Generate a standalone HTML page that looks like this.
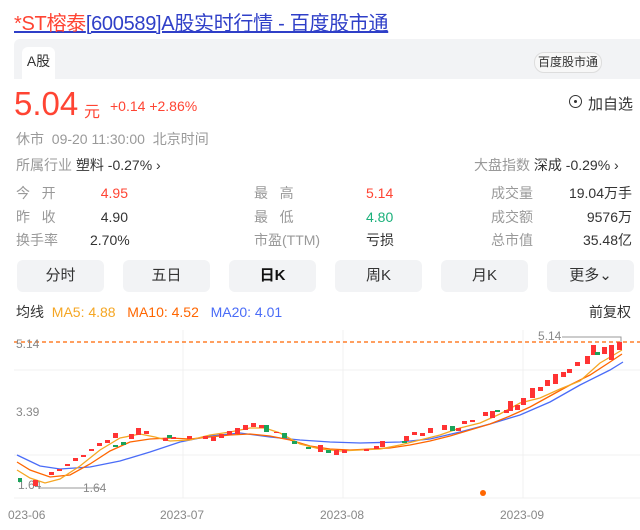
<html><head><style>
body{margin:0;width:640px;height:530px;overflow:hidden;background:#fff;font-family:"Liberation Sans","Noto Sans CJK SC",sans-serif;position:relative}
.a{position:absolute;white-space:nowrap}
.g{color:#999}.d{color:#333}.r{color:#f43}
.btn{position:absolute;top:260px;height:32px;width:87px;background:#f2f3f5;border-radius:6px;text-align:center;line-height:32px;font-size:15px;color:#333}
</style></head><body>
<div class="a" style="left:14px;top:7px;font-size:20px;letter-spacing:-0.3px;text-decoration:underline;color:#2f3fc8"><span style="color:#f43">*ST榕泰</span>[600589]A股实时行情 - 百度股市通</div>
<div class="a" style="left:14px;top:39px;width:626px;height:40px;background:#f2f3f5;border-radius:6px 0 0 0"></div>
<div class="a" style="left:22px;top:47px;width:33px;height:33px;background:#fff;border-radius:6px 6px 0 0;font-size:14px;line-height:28px;text-align:center;color:#333">A股</div>
<div class="a" style="left:534px;top:52px;width:66px;height:19px;border:1px solid #ddd;border-radius:10px;font-size:12px;line-height:19px;text-align:center;color:#333;background:#f7f7f7">百度股市通</div>
<div class="a r" style="left:14px;top:85px;font-size:33px">5.04</div>
<div class="a r" style="left:84px;top:98px;font-size:16px">元</div>
<div class="a r" style="left:110px;top:98px;font-size:14px">+0.14 +2.86%</div>
<div class="a" style="left:569px;top:95px;width:11px;height:11px;border:1px solid #333;border-radius:50%"></div>
<div class="a" style="left:574px;top:100px;width:3px;height:3px;background:#333;border-radius:50%"></div>
<div class="a d" style="left:588px;top:93px;font-size:15px">加自选</div>
<div class="a g" style="left:16px;top:129px;font-size:14px">休市&nbsp; 09-20 11:30:00&nbsp; 北京时间</div>
<div class="a" style="left:16px;top:155px;font-size:14px"><span class="g">所属行业</span> <span class="d">塑料 -0.27% ›</span></div>
<div class="a" style="left:474px;top:155px;font-size:14px"><span class="g">大盘指数</span> <span class="d">深成 -0.29% ›</span></div>
<div class="a g" style="left:16px;top:182px;font-size:14px;line-height:23.5px">今&nbsp;&nbsp;&nbsp;开<br>昨&nbsp;&nbsp;&nbsp;收<br>换手率</div>
<div class="a" style="left:90px;top:182px;width:38px;font-size:14px;line-height:23.5px;text-align:right"><span class="r">4.95</span><br><span class="d">4.90</span><br><span class="d">2.70%</span></div>
<div class="a g" style="left:254px;top:182px;font-size:14px;line-height:23.5px">最&nbsp;&nbsp;&nbsp;高<br>最&nbsp;&nbsp;&nbsp;低<br>市盈(TTM)</div>
<div class="a" style="left:366px;top:182px;font-size:14px;line-height:23.5px"><span class="r">5.14</span><br><span style="color:#1ab07a">4.80</span><br><span class="d">亏损</span></div>
<div class="a g" style="left:491px;top:182px;font-size:14px;line-height:23.5px">成交量<br>成交额<br>总市值</div>
<div class="a d" style="left:560px;top:182px;width:72px;font-size:14px;line-height:23.5px;text-align:right">19.04万手<br>9576万<br>35.48亿</div>
<div class="btn" style="left:17px">分时</div><div class="btn" style="left:123px">五日</div><div class="btn" style="left:229px;font-weight:bold;color:#111">日K</div><div class="btn" style="left:335px">周K</div><div class="btn" style="left:441px">月K</div><div class="btn" style="left:547px">更多⌄</div>
<div class="a" style="left:16px;top:302px;font-size:14px"><span class="d">均线</span>&nbsp; <span style="color:#f5a623">MA5: 4.88</span>&nbsp;&nbsp; <span style="color:#f60">MA10: 4.52</span>&nbsp;&nbsp; <span style="color:#4a6cf7">MA20: 4.01</span></div>
<div class="a d" style="left:589px;top:302px;font-size:14px">前复权</div>
<svg class="a" style="left:0;top:320px" width="640" height="210" viewBox="0 320 640 210">
<g stroke="#f0f0f0" stroke-width="1"><line x1="14" y1="370" x2="640" y2="370"/><line x1="14" y1="455" x2="640" y2="455"/><line x1="14" y1="498" x2="640" y2="498"/><line x1="183" y1="330" x2="183" y2="498"/><line x1="343" y1="330" x2="343" y2="498"/><line x1="523" y1="330" x2="523" y2="498"/></g>
<line x1="14" y1="342" x2="640" y2="342" stroke="#f60" stroke-dasharray="4,3" stroke-width="1.2"/>
<g font-size="12" fill="#888" font-family="Liberation Sans,sans-serif"><text x="16" y="348">5.14</text><text x="16" y="416">3.39</text><text x="18" y="489">1.64</text><text x="83" y="492">1.64</text><text x="538" y="340">5.14</text>
<text x="8" y="519">023-06</text><text x="160" y="519">2023-07</text><text x="320" y="519">2023-08</text><text x="500" y="519">2023-09</text></g>
<polyline points="38,488 100,488" stroke="#999" fill="none"/><polyline points="562,337 621,337 621,342" stroke="#999" fill="none"/>
<circle cx="483" cy="493" r="3" fill="#f60"/>
<polyline fill="none" stroke="#4a6cf7" stroke-width="1.3" points="17,455 40,466 60,469 90,467 120,461 150,452 180,442 210,436 240,433 270,437 300,440 330,442 360,443 400,442 430,439 460,432 490,424 520,415 550,402 580,385 610,370 623,362"/>
<polyline fill="none" stroke="#f60" stroke-width="1.3" points="17,462 30,470 50,477 70,475 90,464 110,451 130,442 150,439 170,438 190,439 210,437 230,435 250,434 270,436 290,440 310,446 330,449 350,450 370,449 390,448 410,445 430,441 450,436 470,430 490,424 510,416 530,407 550,396 570,385 590,375 610,362 622,354"/>
<polyline fill="none" stroke="#f5a623" stroke-width="1.3" points="17,470 30,478 45,483 60,479 80,466 100,450 120,438 140,434 155,437 170,441 190,440 210,435 230,432 250,428 265,428 280,433 300,444 320,449 340,451 360,450 380,449 400,445 420,440 440,435 460,428 480,423 500,414 520,403 540,398 560,389 580,381 600,363 612,356 622,350"/>
<g fill="#f33">
<rect x="33" y="480" width="5" height="6"/><rect x="49" y="472" width="5" height="3"/><rect x="57" y="469" width="5" height="2"/><rect x="65" y="464" width="5" height="2"/><rect x="73" y="458" width="5" height="3"/><rect x="81" y="455" width="5" height="2"/><rect x="89" y="449" width="5" height="2"/><rect x="97" y="443" width="5" height="3"/><rect x="105" y="440" width="5" height="3"/><rect x="113" y="433" width="5" height="5"/><rect x="129" y="434" width="5" height="5"/><rect x="136" y="428" width="5" height="7"/><rect x="144" y="431" width="5" height="3"/><rect x="163" y="438" width="5" height="3"/><rect x="171" y="437" width="5" height="2"/><rect x="187" y="436" width="5" height="3"/><rect x="203" y="436" width="5" height="3"/><rect x="211" y="437" width="5" height="4"/><rect x="219" y="434" width="5" height="4"/><rect x="227" y="431" width="5" height="4"/><rect x="235" y="428" width="5" height="6"/><rect x="243" y="425" width="5" height="5"/><rect x="251" y="423" width="5" height="4"/><rect x="259" y="425" width="5" height="3"/><rect x="274" y="432" width="5" height="1"/><rect x="318" y="445" width="5" height="7"/><rect x="334" y="450" width="5" height="5"/><rect x="342" y="450" width="5" height="3"/><rect x="364" y="449" width="5" height="2"/><rect x="374" y="446" width="5" height="3"/><rect x="380" y="441" width="5" height="6"/><rect x="404" y="436" width="5" height="5"/><rect x="412" y="432" width="5" height="3"/><rect x="420" y="433" width="5" height="3"/><rect x="428" y="428" width="5" height="5"/><rect x="442" y="425" width="5" height="5"/><rect x="456" y="428" width="5" height="3"/><rect x="462" y="421" width="5" height="3"/><rect x="470" y="420" width="5" height="2"/><rect x="483" y="412" width="5" height="4"/><rect x="490" y="411" width="5" height="7"/><rect x="504" y="410" width="5" height="3"/><rect x="508" y="401" width="5" height="10"/><rect x="515" y="405" width="5" height="5"/><rect x="521" y="398" width="5" height="7"/><rect x="530" y="388" width="5" height="10"/><rect x="538" y="387" width="5" height="4"/><rect x="545" y="380" width="5" height="6"/><rect x="553" y="374" width="5" height="10"/><rect x="561" y="372" width="5" height="5"/><rect x="567" y="369" width="5" height="4"/><rect x="575" y="362" width="5" height="4"/><rect x="585" y="356" width="5" height="8"/><rect x="591" y="345" width="5" height="10"/><rect x="602" y="347" width="5" height="7"/><rect x="609" y="345" width="5" height="15"/><rect x="617" y="342" width="5" height="8"/>
</g>
<g fill="#1aa35a">
<rect x="18" y="478" width="4" height="4"/><rect x="113" y="445" width="5" height="2"/><rect x="121" y="442" width="5" height="3"/><rect x="167" y="435" width="5" height="3"/><rect x="264" y="425" width="5" height="7"/><rect x="282" y="433" width="5" height="5"/><rect x="292" y="441" width="5" height="3"/><rect x="306" y="447" width="5" height="2"/><rect x="326" y="450" width="5" height="3"/><rect x="402" y="441" width="5" height="2"/><rect x="450" y="426" width="5" height="5"/><rect x="495" y="410" width="5" height="2"/><rect x="595" y="352" width="5" height="3"/>
</g>
</svg>
</body></html>
